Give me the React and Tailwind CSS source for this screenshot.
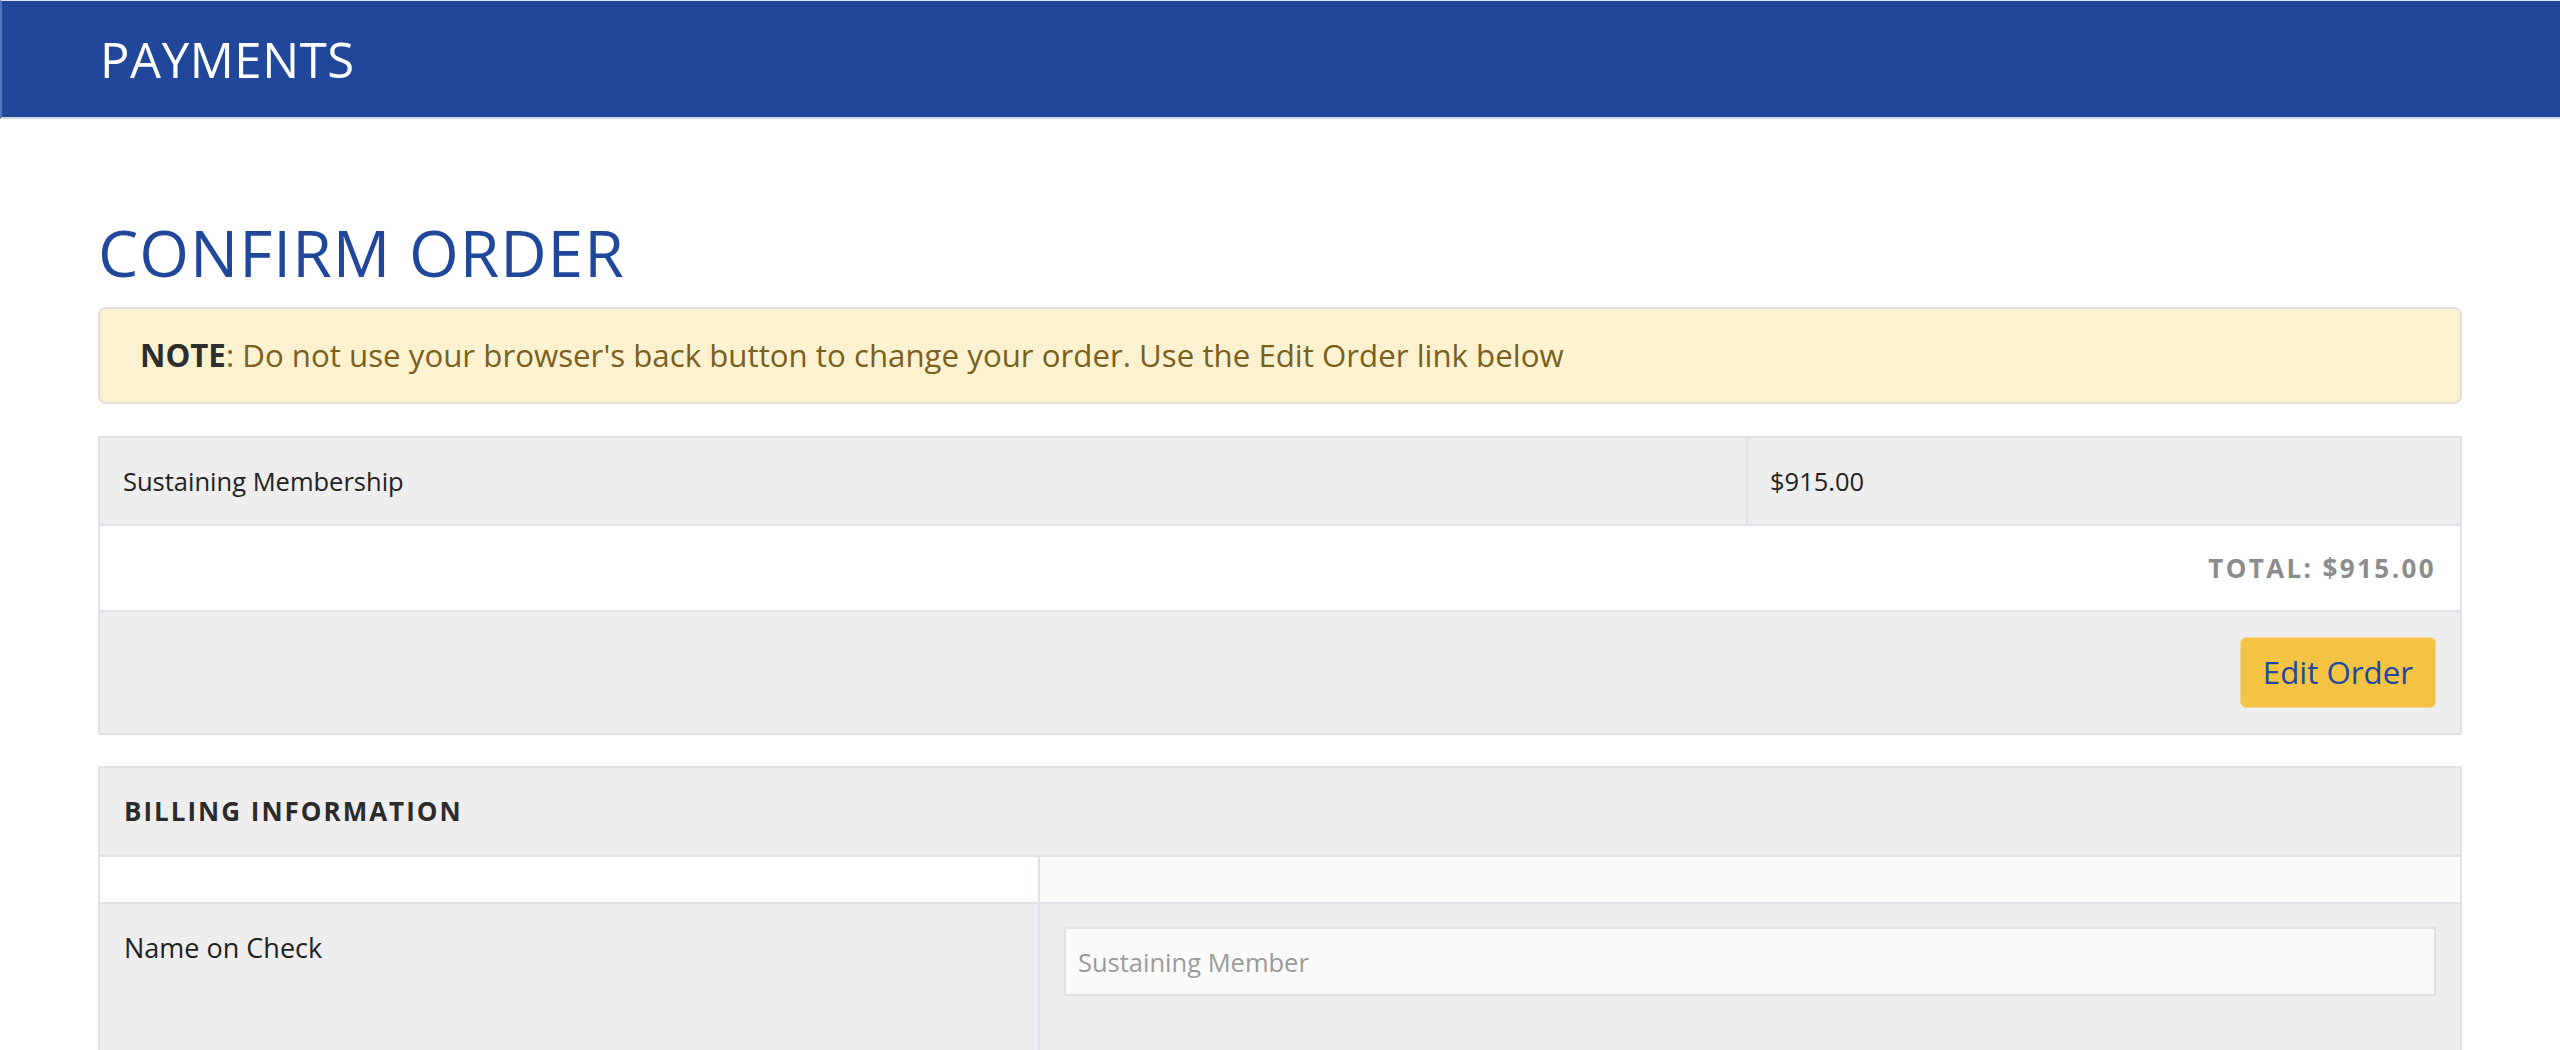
import React from 'react';

const font = { fontFamily: '"Open Sans", "Liberation Sans", sans-serif' };

export default function App() {
  return (
    <div className="min-h-[1200px] bg-white text-[#222]" style={font}>
      {/* Top bar */}
      <header className="h-[119px] bg-[#21479b] border-t border-l-2 border-b-2 border-t-[#dfe3ea] border-l-[#5773b3] border-b-[#d4d8de] flex items-center px-[98px]">
        <h1 className="text-[49px] leading-none text-white tracking-[0.6px]">PAYMENTS</h1>
      </header>

      <main className="px-[98px] pt-[102px]">
        <h2 className="text-[64px] leading-none text-[#21479b] tracking-[1px]">CONFIRM ORDER</h2>

        {/* Warning note */}
        <div className="mt-[22px] h-[97px] flex items-center px-[40px] bg-[#fdf2d0] border-2 border-[#e3e1da] rounded-[8px] text-[31.25px] text-[#7a5f1e]">
          <p>
            <span className="font-bold text-[#2d2d2d]">NOTE</span>: Do not use your browser's back button to change your order. Use the Edit Order link below
          </p>
        </div>

        {/* Order summary */}
        <div className="mt-[32px] border-2 border-[#dfe2e6] bg-[#eeeeee]">
          <div className="grid grid-cols-[1648px_1fr] h-[86px] text-[25.5px]">
            <div className="flex items-center px-[23px] border-r-2 border-[#dfe2e6]">Sustaining Membership</div>
            <div className="flex items-center px-[22px]">$915.00</div>
          </div>
          <div className="h-[86px] bg-white border-t-2 border-[#dfe2e6] flex items-center justify-end px-[24px]">
            <span className="text-[26px] font-bold tracking-[2.4px] text-[#8c8c8c]">TOTAL: $915.00</span>
          </div>
          <div className="h-[123px] border-t-2 border-[#dfe2e6] flex items-center justify-end px-[24px]">
            <button className="h-[71px] px-[22px] bg-[#f4c344] border border-[#f1d79a] rounded-[6px] text-[31.25px] text-[#2148a0]">
              Edit Order
            </button>
          </div>
        </div>

        {/* Billing information */}
        <div className="mt-[31px] border-2 border-[#dfe2e6] bg-[#eeeeee]">
          <div className="h-[87px] flex items-center px-[24px]">
            <h3 className="text-[26px] font-bold tracking-[2px] text-[#2b2b2b]">BILLING INFORMATION</h3>
          </div>
          <div className="grid grid-cols-[940px_1fr] h-[47px] border-t-2 border-[#dfe2e6]">
            <div className="bg-white border-r-2 border-[#dfe2e6]"></div>
            <div className="bg-[#fafafa]"></div>
          </div>
          <div className="grid grid-cols-[940px_1fr] border-t-2 border-[#dfe2e6]">
            <div className="border-r-2 border-[#dfe2e6] pl-[24px] pt-[24px] text-[27px]">Name on Check</div>
            <div className="pt-[23px] pb-[80px] pl-[24px] pr-[24px]">
              <input
                type="text"
                placeholder="Sustaining Member"
                className="w-full h-[69px] px-[12px] bg-[#fafafa] border-2 border-[#e2e2e2] text-[25.5px] text-[#333] placeholder:text-[#9a9a9a] outline-none"
                style={font}
              />
            </div>
          </div>
        </div>
      </main>
    </div>
  );
}
